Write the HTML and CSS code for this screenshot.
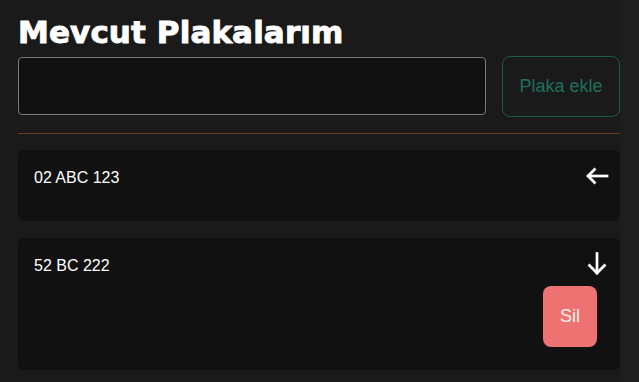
FILE: index.html
```html
<!DOCTYPE html>
<html lang="tr">
<head>
<meta charset="utf-8">
<title>Mevcut Plakalarım</title>
<link rel="stylesheet" href="styles.css">
</head>
<body>
<main class="page">
  <h1 class="title">Mevcut Plakalarım</h1>
  <form class="add-row">
    <input class="plate-input" type="text" aria-label="Plaka">
    <button class="add-btn" type="button">Plaka ekle</button>
  </form>
  <div class="divider"></div>
  <ul class="plate-list">
    <li class="plate-card">
      <div class="plate-head">
        <span class="plate-text">02 ABC 123</span>
        <span class="toggle">
          <svg width="24" height="24" viewBox="0 0 24 24" fill="none" stroke="#fff" stroke-width="2.7" stroke-linecap="square">
            <path d="M22 12H3.5"/>
            <path d="M9.5 5.5L3 12l6.5 6.5"/>
          </svg>
        </span>
      </div>
      <div class="plate-body"></div>
    </li>
    <li class="plate-card">
      <div class="plate-head">
        <span class="plate-text">52 BC 222</span>
        <span class="toggle">
          <svg width="24" height="24" viewBox="0 0 24 24" fill="none" stroke="#fff" stroke-width="2.7" stroke-linecap="square">
            <path d="M12 1.5V21"/>
            <path d="M4.5 13.5L12 21l7.5-7.5"/>
          </svg>
        </span>
      </div>
      <div class="plate-body">
        <button class="del-btn" type="button">Sil</button>
      </div>
    </li>
  </ul>
</main>
</body>
</html>
```
FILE: styles.css
```css
html, body {
  margin: 0;
  padding: 0;
  background: #1e1e1e;
  font-family: "Liberation Sans", Arial, sans-serif;
  color: #fff;
}

.page {
  width: 620px;
  min-height: 382px;
  box-sizing: border-box;
  padding: 14px 0 12px 18px;
  background: #1a1a1a;
}

.title {
  margin: 0 0 5px 0;
  font-family: "DejaVu Sans", sans-serif;
  font-weight: bold;
  font-size: 31px;
  line-height: 37px;
  letter-spacing: 0.1px;
  -webkit-text-stroke: 0.9px #fff;
  color: #fff;
}

.add-row {
  display: flex;
  align-items: flex-start;
  gap: 16px;
  margin: 0;
  height: 61px;
}

.plate-input {
  flex: 1;
  height: 58px;
  margin-top: 1px;
  box-sizing: border-box;
  background: #111;
  border: 1px solid #7a7a7a;
  border-radius: 4px;
  color: #fff;
  font-size: 16px;
  padding: 0 12px;
  outline: none;
}

.add-btn {
  width: 118px;
  height: 61px;
  box-sizing: border-box;
  background: transparent;
  border: 1px solid #1c5a4c;
  border-radius: 8px;
  color: #1f6e5c;
  font-family: "Liberation Sans", Arial, sans-serif;
  font-size: 18px;
  padding: 0;
}

.divider {
  height: 1px;
  background: #73391f;
  margin: 16px 0 16px 0;
}

.plate-list {
  list-style: none;
  margin: 0;
  padding: 0;
  display: flex;
  flex-direction: column;
  gap: 17px;
}

.plate-card {
  background: #111;
  border-radius: 6px;
  padding: 16px 11px 23px 16px;
  display: flex;
  flex-direction: column;
  gap: 12px;
}

.plate-head {
  display: flex;
  align-items: center;
  justify-content: space-between;
  height: 20px;
}

.plate-text {
  font-size: 16px;
  line-height: 20px;
  padding-top: 3px;
  color: #fff;
}

.toggle {
  display: flex;
  width: 24px;
  height: 24px;
}

.plate-body {
  display: flex;
  justify-content: flex-end;
  padding-right: 12px;
}

.del-btn {
  width: 54px;
  height: 61px;
  box-sizing: border-box;
  border: 0;
  border-radius: 8px;
  background: #ef7272;
  color: #fdeeee;
  font-family: "Liberation Sans", Arial, sans-serif;
  font-size: 18px;
  padding: 0;
}
```
